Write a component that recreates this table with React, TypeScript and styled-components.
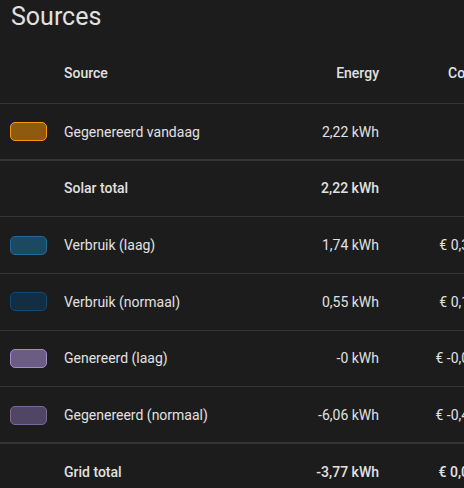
import React from "react";
import styled, { createGlobalStyle } from "styled-components";

const GlobalStyle = createGlobalStyle`
  html, body {
    margin: 0;
    padding: 0;
    background: #1c1c1c;
    overflow: hidden;
  }
  body {
    font-family: Roboto, "Noto Sans", sans-serif;
    color: #e1e1e1;
  }
`;

const Card = styled.div`
  width: 464px;
  height: 488px;
  background: #1c1c1c;
  overflow: hidden;
`;

const Title = styled.h1`
  margin: 0;
  padding: 1px 0 0 11px;
  font-size: 25px;
  font-weight: 400;
  line-height: 32px;
  color: #e1e1e1;
`;

const Table = styled.div`
  width: 477px;
  display: flex;
  flex-direction: column;
`;

const Grid = styled.div`
  display: grid;
  grid-template-columns: 54px 215px 100px 98px;
  align-items: center;
  padding-left: 10px;
  box-sizing: border-box;
`;

const HeaderRow = styled(Grid)`
  height: 70px;
  padding-top: 9px;
  font-size: 14px;
  font-weight: 500;
`;

const Row = styled(Grid)<{ $total?: boolean }>`
  height: 56.67px;
  border-top: 1px solid #343434;
  box-shadow: ${(p) => (p.$total ? "0 -1px 0 #343434" : "none")};
  font-size: 14px;
  font-weight: ${(p) => (p.$total ? 500 : 400)};
`;

const Cell = styled.div<{ $align?: "left" | "right" }>`
  text-align: ${(p) => p.$align ?? "left"};
  white-space: nowrap;
`;

const Swatch = styled.div<{ $border: string; $fill: string }>`
  width: 37px;
  height: 19px;
  box-sizing: border-box;
  border: 1px solid ${(p) => p.$border};
  background: ${(p) => p.$fill};
  border-radius: 5px;
`;

type RowData = {
  name: string;
  energy: string;
  cost?: string;
  total?: boolean;
  swatch?: { border: string; fill: string };
};

const rows: RowData[] = [
  {
    name: "Gegenereerd vandaag",
    energy: "2,22 kWh",
    swatch: { border: "#ff9800", fill: "#8d5a10" },
  },
  { name: "Solar total", energy: "2,22 kWh", total: true },
  {
    name: "Verbruik (laag)",
    energy: "1,74 kWh",
    cost: "€ 0,38",
    swatch: { border: "#1f6a9c", fill: "#1c4862" },
  },
  {
    name: "Verbruik (normaal)",
    energy: "0,55 kWh",
    cost: "€ 0,12",
    swatch: { border: "#0d4a75", fill: "#122e44" },
  },
  {
    name: "Genereerd (laag)",
    energy: "-0 kWh",
    cost: "€ -0,00",
    swatch: { border: "#a48bd0", fill: "#6a5c82" },
  },
  {
    name: "Gegenereerd (normaal)",
    energy: "-6,06 kWh",
    cost: "€ -0,42",
    swatch: { border: "#7a689e", fill: "#514566" },
  },
  { name: "Grid total", energy: "-3,77 kWh", cost: "€ 0,08", total: true },
];

export default function App() {
  return (
    <Card>
      <GlobalStyle />
      <Title>Sources</Title>
      <Table>
        <HeaderRow>
          <Cell />
          <Cell>Source</Cell>
          <Cell $align="right">Energy</Cell>
          <Cell $align="right">Cost</Cell>
        </HeaderRow>
        {rows.map((r) => (
          <Row key={r.name} $total={r.total}>
            <Cell>
              {r.swatch && <Swatch $border={r.swatch.border} $fill={r.swatch.fill} />}
            </Cell>
            <Cell>{r.name}</Cell>
            <Cell $align="right">{r.energy}</Cell>
            <Cell $align="right">{r.cost ?? ""}</Cell>
          </Row>
        ))}
      </Table>
    </Card>
  );
}
